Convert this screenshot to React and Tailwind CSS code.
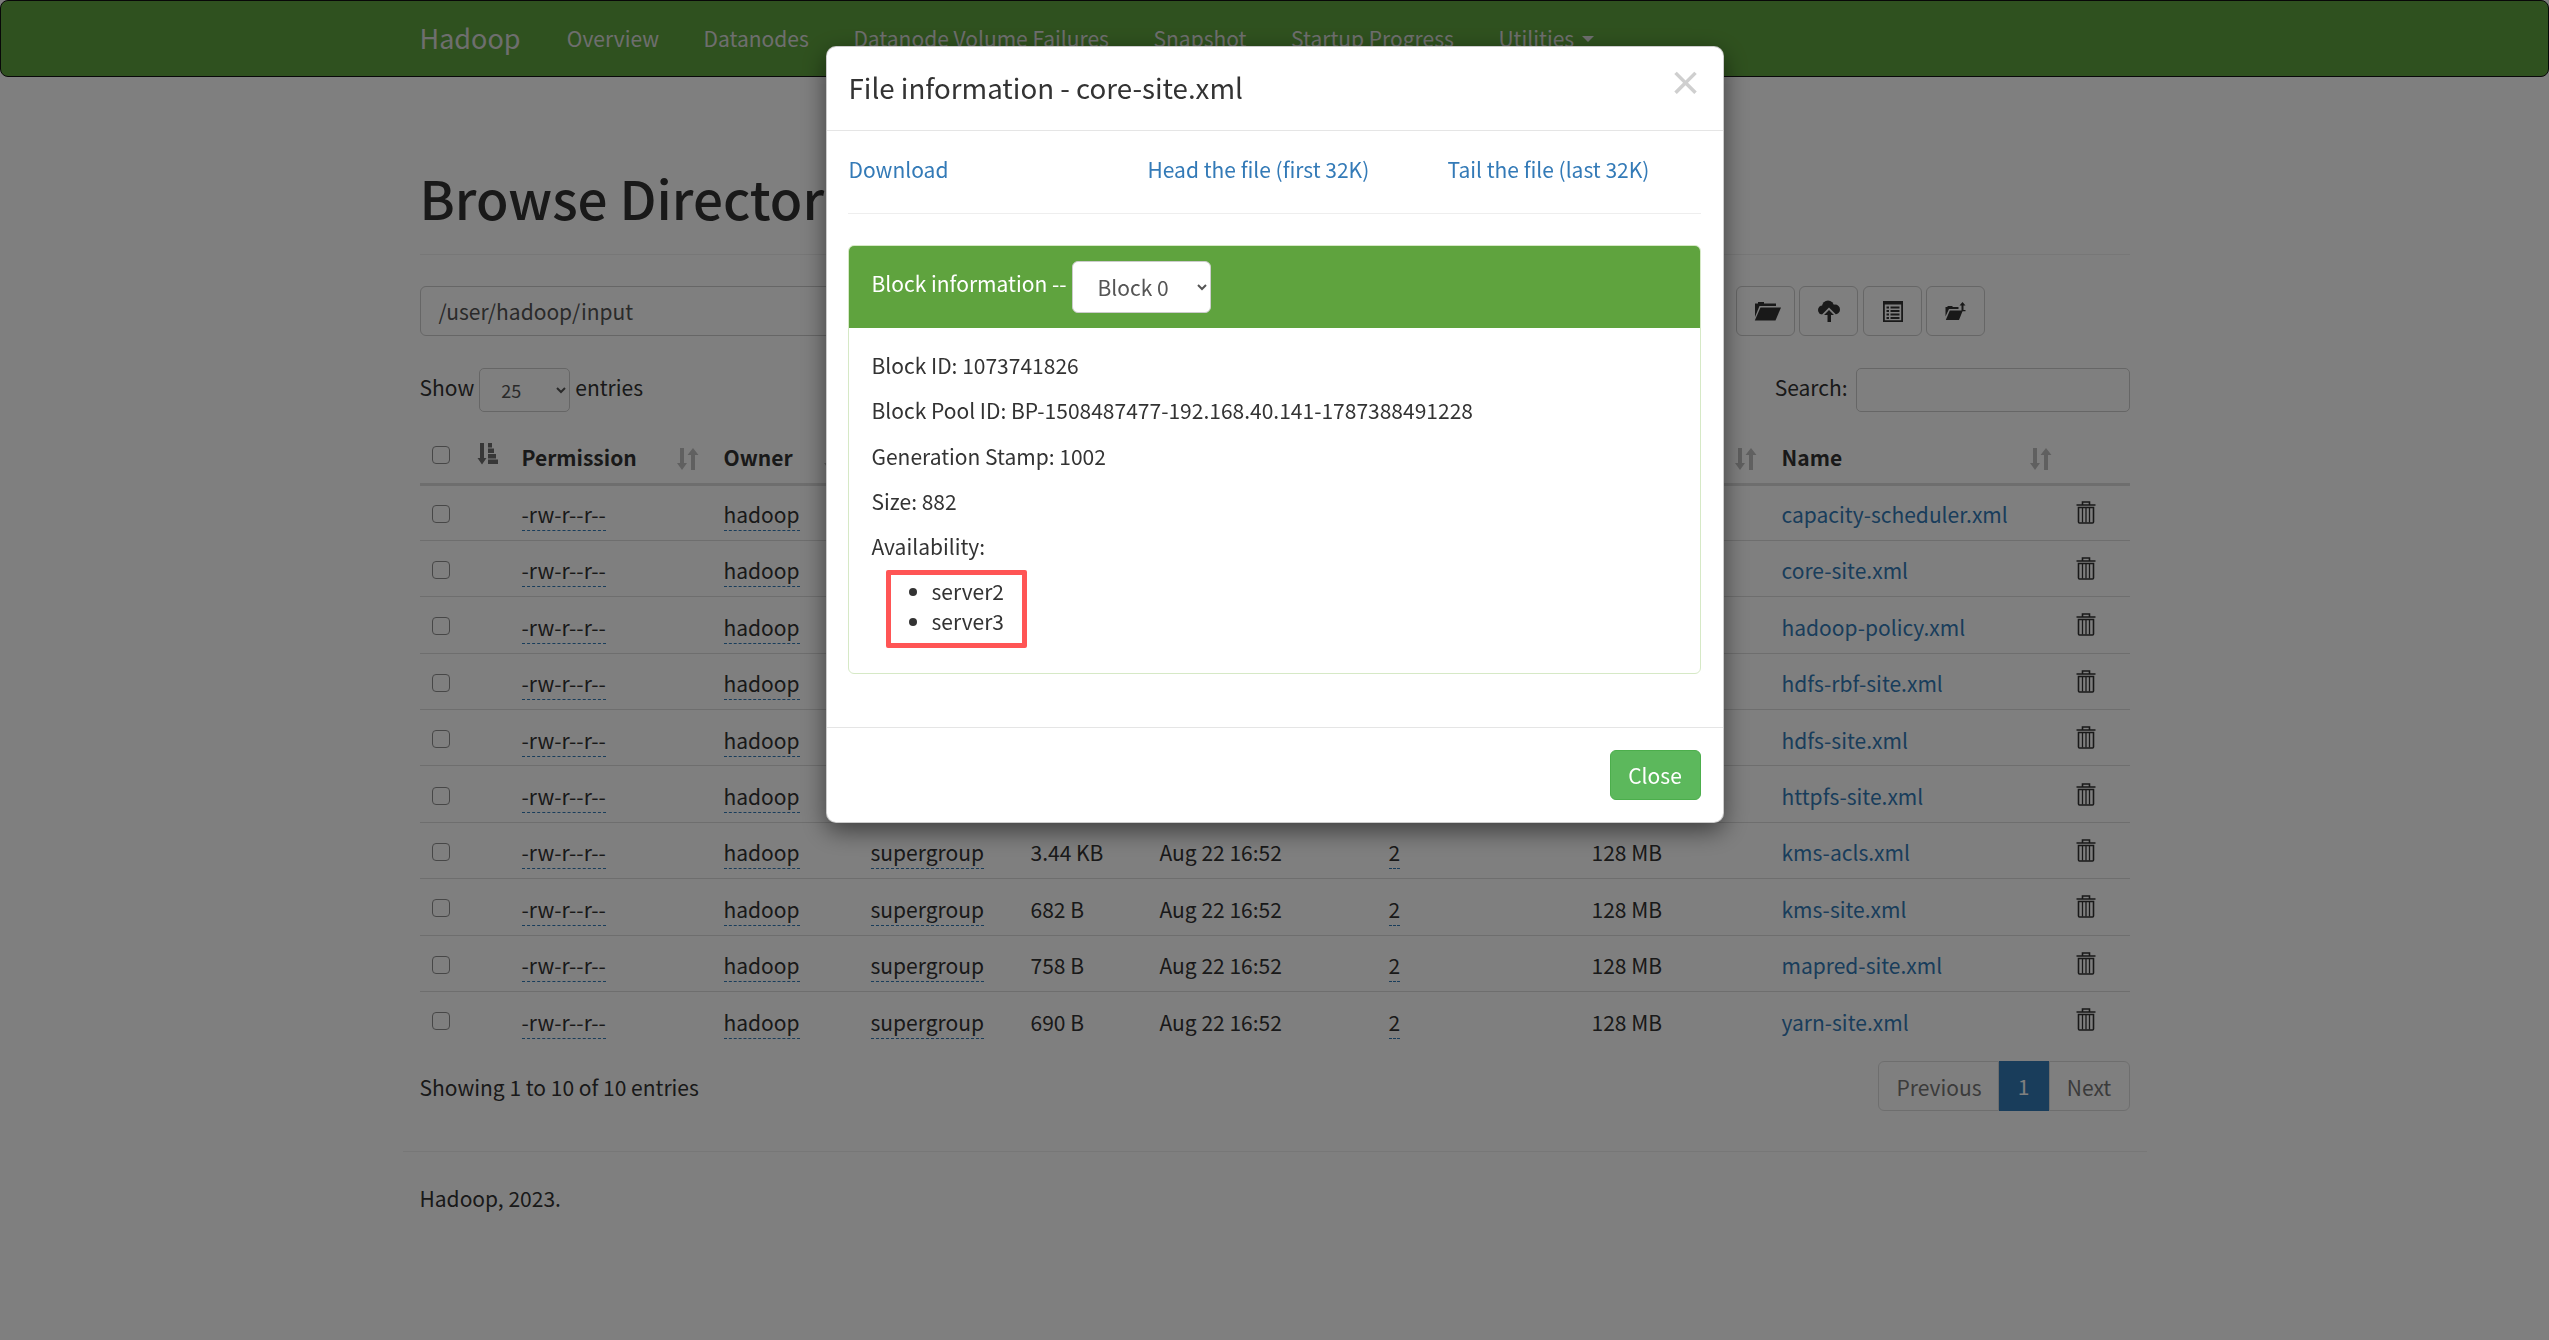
import React from "react";

const FONT = "font-['Noto_Sans_CJK_SC','Source_Sans_Pro',sans-serif]";

const rows = [
  { size: "9.19 KB", name: "capacity-scheduler.xml" },
  { size: "882 B", name: "core-site.xml" },
  { size: "10.04 KB", name: "hadoop-policy.xml" },
  { size: "683 B", name: "hdfs-rbf-site.xml" },
  { size: "1.05 KB", name: "hdfs-site.xml" },
  { size: "620 B", name: "httpfs-site.xml" },
  { size: "3.44 KB", name: "kms-acls.xml" },
  { size: "682 B", name: "kms-site.xml" },
  { size: "758 B", name: "mapred-site.xml" },
  { size: "690 B", name: "yarn-site.xml" },
];

const navItems = ["Overview", "Datanodes", "Datanode Volume Failures", "Snapshot", "Startup Progress"];

function FolderOpenIcon() {
  return (
    <svg width="27" height="20" viewBox="0 0 27 20" fill="#333" className="ml-[4px]">
      <path d="M1 2.500h3V1h6v1.500h12V5H5.500L1 16z" />
      <path d="M6.500 6.500H27L21.500 19.500H0.800z" />
    </svg>
  );
}

function CloudUploadIcon() {
  return (
    <svg width="22" height="22" viewBox="0 0 22 22" fill="#333" className="ml-[1px]">
      <circle cx="4.500" cy="10" r="4.500" />
      <circle cx="10" cy="6.500" r="6" />
      <circle cx="17" cy="9.500" r="5" />
      <path d="M4 11h14v4H4z" />
      <path d="M11 7.500l7.500 7.500h-4v7h-7v-7h-4z" fill="#fff" />
      <path d="M11 10l5 5h-3v7H9.500v-7h-3.500z" />
    </svg>
  );
}

function ListAltIcon() {
  return (
    <svg width="20" height="21" viewBox="0 0 20 21" fill="#333" className="ml-[1px]">
      <path d="M0 0h20v21H0zM1.800 3.500v15.700h16.400V3.500z" fillRule="evenodd" />
      <path d="M3.500 5.500h2.500v2H3.500zM7.500 5.500h9v2h-9zM3.500 9h2.500v2H3.500zM7.500 9h9v2h-9zM3.500 12.500h2.500v2H3.500zM7.500 12.500h9v2h-9zM3.500 16h2.500v2H3.500zM7.500 16h9v2h-9z" />
    </svg>
  );
}

function FolderUpIcon() {
  return (
    <svg width="21" height="18" viewBox="0 0 21 18" fill="#333">
      <path d="M0.500 5h2V4h5v1h6v2H4L0.500 14.500z" />
      <path d="M4.800 8.500h13L14 18H0.800z" />
      <path d="M17.500 0l3 3.500h-2V8h2v1.200h-4V3.500h-2z" />
    </svg>
  );
}

function TrashIcon() {
  return (
    <svg width="20" height="23" viewBox="0 0 20 23" fill="none" stroke="#333" strokeWidth="1.600">
      <path d="M6.500 3.500V1h7v2.500M0.500 4h19" />
      <path d="M2.500 6.500h15V21a1 1 0 0 1-1 1h-13a1 1 0 0 1-1-1z" />
      <path d="M6.500 7v14.500M10 7v14.500M13.500 7v14.500" strokeWidth="1.300" />
    </svg>
  );
}

function SortIcon({ active }) {
  if (active) {
    return (
      <svg width="21" height="22" viewBox="0 0 21 22" fill="#333" className="opacity-70">
        <path d="M3 0h4v15h2.500L5 21.500 0.500 15H3z" />
        <path d="M11 0h4v4.500h-4zM11 5.500h6v4.500h-6zM11 11h8v4.500h-8zM11 16.500h10V21H11z" />
      </svg>
    );
  }
  return (
    <svg width="22" height="22" viewBox="0 0 22 22" fill="#333" className="opacity-30">
      <path d="M3 0h4v15h3l-5 7-5-7h3z" />
      <path d="M14 22h4V7h3.500L16 0l-5.500 7H14z" />
    </svg>
  );
}

function Checkbox({ className }) {
  return (
    <input
      type="checkbox"
      className={`appearance-none block w-[18px] h-[18px] bg-white border-[1.6px] border-[#8f8f8f] rounded-[4px] ${className}`}
    />
  );
}

function Dashed({ children }) {
  return <span className="border-b-[1.6px] border-dashed border-[#337ab7] pb-[1px]">{children}</span>;
}

function HeaderCell({ label }) {
  return (
    <th className="pl-[14px] pr-[12px] align-bottom pb-[9px] text-left font-bold relative">
      {label}
      <span className="absolute right-[11px] bottom-[13px]">
        <SortIcon />
      </span>
    </th>
  );
}

function ToolButton({ children }) {
  return (
    <button className="w-[59px] h-[50px] border border-[#ccc] rounded-[6px] bg-white flex items-center justify-center">
      {children}
    </button>
  );
}

function FileTable() {
  return (
    <table className="w-[1710px] table-fixed border-collapse">
      <colgroup>
        <col className="w-[88px]" />
        <col className="w-[202px]" />
        <col className="w-[147px]" />
        <col className="w-[160px]" />
        <col className="w-[129px]" />
        <col className="w-[229px]" />
        <col className="w-[203px]" />
        <col className="w-[190px]" />
        <col className="w-[295px]" />
        <col className="w-[67px]" />
      </colgroup>
      <thead>
        <tr className="h-[55px] border-b-[3px] border-[#ddd]">
          <th className="relative">
            <Checkbox className="absolute left-[12px] top-[17px]" />
            <span className="absolute left-[57px] top-[14px]">
              <SortIcon active />
            </span>
          </th>
          <HeaderCell label="Permission" />
          <HeaderCell label="Owner" />
          <HeaderCell label="Group" />
          <HeaderCell label="Size" />
          <HeaderCell label="Last Modified" />
          <HeaderCell label="Replication" />
          <HeaderCell label="Block Size" />
          <HeaderCell label="Name" />
          <th />
        </tr>
      </thead>
      <tbody>
        {rows.map((row, i) => (
          <tr key={row.name} className={i > 0 ? "h-[56.4px] border-t-[1.6px] border-[#ddd]" : "h-[56.4px]"}>
            <td className="pl-[12px]">
              <Checkbox className="mt-[3px]" />
            </td>
            <td className="pl-[14px] pt-[4px]"><Dashed>-rw-r--r--</Dashed></td>
            <td className="pl-[14px] pt-[4px]"><Dashed>hadoop</Dashed></td>
            <td className="pl-[14px] pt-[4px]"><Dashed>supergroup</Dashed></td>
            <td className="pl-[14px] pt-[4px]">{row.size}</td>
            <td className="pl-[14px] pt-[4px]">Aug 22 16:52</td>
            <td className="pl-[14px] pt-[4px]"><Dashed>2</Dashed></td>
            <td className="pl-[14px] pt-[4px]">128 MB</td>
            <td className="pl-[14px] pt-[4px] text-[#337ab7]">{row.name}</td>
            <td className="px-[13px]"><TrashIcon /></td>
          </tr>
        ))}
      </tbody>
    </table>
  );
}

function FileModal() {
  return (
    <div className="fixed inset-0 bg-black/50 flex justify-center">
      <div className="w-[898px] h-[777px] mt-[46px] bg-white rounded-[10px] border border-black/20 shadow-[0_8px_24px_rgba(0,0,0,0.5)] flex flex-col">
        <div className="h-[84px] shrink-0 border-b-[1.6px] border-[#e5e5e5] flex justify-between pl-[22px] pr-[20px]">
          <h4 className="text-[27.7px] leading-[80px]">File information - core-site.xml</h4>
          <span className="text-[34px] leading-[70px] font-bold text-[#cfcfcf]">×</span>
        </div>
        <div className="pl-[21px] pr-[22px] flex-1">
          <div className="h-[83px] border-b-[1.6px] border-[#eee] flex items-center text-[#337ab7] pb-[6px] pl-[1px]">
            <a className="w-[299px]">Download</a>
            <a className="w-[300px]">Head the file (first 32K)</a>
            <a>Tail the file (last 32K)</a>
          </div>
          <div className="mt-[31px] border border-[#d6e9c6] rounded-[6px] h-[429px]">
            <div className="h-[82px] bg-[#5fa33e] rounded-t-[5px] text-white flex items-center pl-[23px]">
              <span className="-mt-[7px]">Block information --</span>
              <select className="ml-[5px] -mt-[1px] w-[139px] h-[52px] bg-white border border-[#ccc] rounded-[6px] text-[#555] pl-[21px]">
                <option>Block 0</option>
              </select>
            </div>
            <div className="pt-[21px] pl-[23px]">
              <p className="mb-[12.8px]">Block ID: 1073741826</p>
              <p className="mb-[12.8px]">Block Pool ID: BP-1508487477-192.168.40.141-1787388491228</p>
              <p className="mb-[12.8px]">Generation Stamp: 1002</p>
              <p className="mb-[12.8px]">Size: 882</p>
              <p className="mb-[7.500px]">Availability:</p>
              <ul className="ml-[14px] w-[141px] h-[78px] border-[5px] border-[#ff5555] rounded-[2px] pt-[1px] pl-[41px] list-disc leading-[30px]">
                <li>server2</li>
                <li>server3</li>
              </ul>
            </div>
          </div>
        </div>
        <div className="h-[95px] shrink-0 border-t-[1.6px] border-[#e5e5e5] flex items-center justify-end pr-[22px]">
          <button className="w-[91px] h-[50px] bg-[#5cb85c] border border-[#4cae4c] rounded-[6px] text-white">Close</button>
        </div>
      </div>
    </div>
  );
}

export default function App() {
  return (
    <div className={`${FONT} bg-white text-[#333] text-[21px] leading-[32.5px] h-[1340px] overflow-hidden`}>
      <nav className="h-[77px] bg-[#5fa33e] border border-[#111] rounded-[8px] flex justify-center">
        <div className="w-[1710px] flex items-center text-[#ddd]">
          <span className="text-[27px] mr-[24px]">Hadoop</span>
          {navItems.map((item) => (
            <span key={item} className="px-[22.3px]">{item}</span>
          ))}
          <span className="px-[22.3px] flex items-center gap-[8px]">
            Utilities
            <span className="w-0 h-0 border-x-[6px] border-x-transparent border-t-[6px] border-t-[#ddd]" />
          </span>
        </div>
      </nav>

      <main className="w-[1747px] mx-auto px-[18.5px]">
        <div className="h-[178px] border-b-[1.6px] border-[#eee] pt-[88px]">
          <h1 className="text-[53px] leading-[64px] font-medium">Browse Directory</h1>
        </div>

        <div className="mt-[31px] flex h-[50px]">
          <div className="w-[1290px] h-[50px] border border-[#ccc] rounded-[6px] px-[18px] leading-[49px] text-[#555]">
            /user/hadoop/input
          </div>
          <div className="ml-[26px] flex gap-[4.5px]">
            <ToolButton><FolderOpenIcon /></ToolButton>
            <ToolButton><CloudUploadIcon /></ToolButton>
            <ToolButton><ListAltIcon /></ToolButton>
            <ToolButton><FolderUpIcon /></ToolButton>
          </div>
        </div>

        <div className="mt-[32px] h-[44px] flex justify-between items-center">
          <div className="flex items-center">
            <span className="-mt-[5px]">Show</span>
            <select className="mx-[5px] w-[91px] h-[44px] border border-[#ccc] rounded-[5px] text-[18px] text-[#555] pl-[17px]">
              <option>25</option>
            </select>
            <span className="-mt-[5px]">entries</span>
          </div>
          <div className="flex items-center">
            <span className="-mt-[5px]">Search:</span>
            <input className="ml-[8px] w-[274px] h-[44px] border border-[#ccc] rounded-[5px]" />
          </div>
        </div>

        <div className="mt-[17px]">
          <FileTable />
        </div>

        <div className="mt-[13px] flex justify-between items-start h-[50px]">
          <div className="pt-[10px]">Showing 1 to 10 of 10 entries</div>
          <div className="flex h-[50px] leading-[50px]">
            <span className="w-[121px] border border-[#ddd] rounded-l-[6px] text-center text-[#777] pl-[2px]">Previous</span>
            <span className="w-[50px] bg-[#337ab7] text-center text-white">1</span>
            <span className="w-[81px] border border-[#ddd] rounded-r-[6px] text-center text-[#777]">Next</span>
          </div>
        </div>

        <div className="-mx-[17px] mt-[40px] border-t-[1.6px] border-[#eee] px-[17px] pt-[30px]">Hadoop, 2023.</div>
      </main>

      <FileModal />
    </div>
  );
}
